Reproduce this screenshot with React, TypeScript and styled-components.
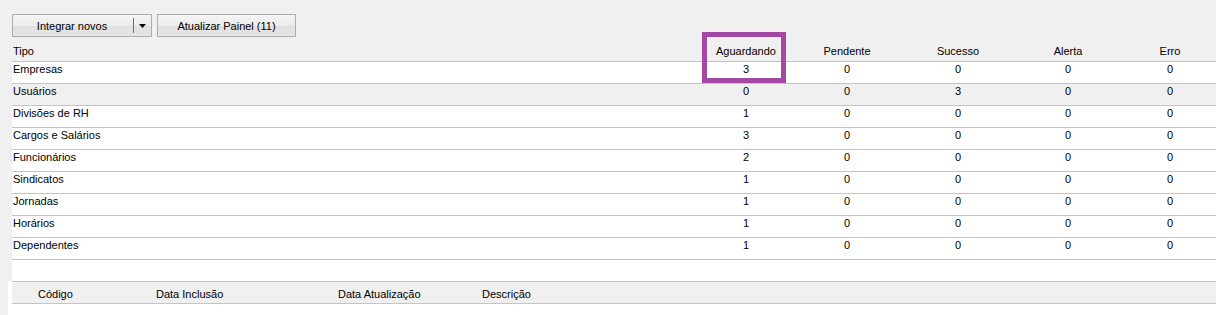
import React from "react";
import styled, { createGlobalStyle } from "styled-components";

const Global = createGlobalStyle`
  html, body { margin: 0; padding: 0; background: #f0f0f0; }
  body { font-family: "Liberation Sans", Arial, sans-serif; font-size: 11px; color: #000; }
`;

const Page = styled.div`
  position: relative;
  width: 1216px;
  height: 315px;
  overflow: hidden;
  background: #f0f0f0;
  display: flex;
  flex-direction: column;
`;

const Toolbar = styled.div`
  display: flex;
  gap: 5px;
  padding: 14px 0 0 12px;
  height: 23px;
`;

const ButtonBase = styled.div`
  box-sizing: border-box;
  height: 23px;
  border: 1px solid #adadad;
  background: linear-gradient(#f4f4f4, #ececec 50%, #e0e0e0 51%, #e5e5e5);
  display: flex;
  align-items: center;
  font-size: 11px;
  line-height: 16px;
  color: #000;
`;

const SplitButton = styled(ButtonBase)`
  width: 140px;
`;

const SplitMain = styled.div`
  width: 118px;
  text-align: center;
`;

const SplitDivider = styled.div`
  width: 1px;
  height: 15px;
  margin-left: 2px;
  background: #6b6b6b;
`;

const SplitArrow = styled.div`
  flex: 1;
  display: flex;
  justify-content: center;
  align-items: center;
`;

const PlainButton = styled(ButtonBase)`
  width: 139px;
  justify-content: center;
`;

const Grid = styled.div`
  margin-left: 12px;
  display: flex;
  flex-direction: column;
`;

const COLS = "684px 100px 102px 120px 100px 98px";

const HeaderRow = styled.div`
  display: grid;
  grid-template-columns: ${COLS};
  height: 24px;
  border-bottom: 1px solid #c4c4c4;
  line-height: 16px;
`;

const HeadCell = styled.div<{ $center?: boolean; $shift?: number }>`
  padding-top: 6px;
  padding-left: ${(p) => (p.$center ? p.$shift ?? 0 : 1)}px;
  text-align: ${(p) => (p.$center ? "center" : "left")};
`;

const Row = styled.div<{ $alt?: boolean }>`
  display: grid;
  grid-template-columns: ${COLS};
  height: 21px;
  border-bottom: 1px solid #c4c4c4;
  background: ${(p) => (p.$alt ? "#f0f0f0" : "#ffffff")};
  line-height: 14px;
`;

const Cell = styled.div<{ $center?: boolean; $shift?: number }>`
  padding-left: ${(p) => (p.$center ? p.$shift ?? 0 : 1)}px;
  text-align: ${(p) => (p.$center ? "center" : "left")};
`;

const Filler = styled.div`
  height: 21px;
  background: #ffffff;
`;

const Detail = styled.div`
  margin-left: 8px;
  flex: 1;
  display: flex;
  flex-direction: column;
  background: #ffffff;
`;

const DetailHeader = styled.div`
  margin-left: 4px;
  display: grid;
  grid-template-columns: 138px 182px 144px 1fr;
  height: 21px;
  border-top: 1px solid #c4c4c4;
  border-bottom: 1px solid #c4c4c4;
  background: #f0f0f0;
  line-height: 16px;
`;

const DetailHead = styled.div<{ $pad: number }>`
  padding: 4px 0 0 ${(p) => p.$pad}px;
`;

const Highlight = styled.div`
  position: absolute;
  left: 702px;
  top: 32px;
  width: 84px;
  height: 51px;
  box-sizing: border-box;
  border: 5px solid #a349a4;
  pointer-events: none;
`;

const rows: [string, number, number, number, number, number][] = [
  ["Empresas", 3, 0, 0, 0, 0],
  ["Usuários", 0, 0, 3, 0, 0],
  ["Divisões de RH", 1, 0, 0, 0, 0],
  ["Cargos e Salários", 3, 0, 0, 0, 0],
  ["Funcionários", 2, 0, 0, 0, 0],
  ["Sindicatos", 1, 0, 0, 0, 0],
  ["Jornadas", 1, 0, 0, 0, 0],
  ["Horários", 1, 0, 0, 0, 0],
  ["Dependentes", 1, 0, 0, 0, 0],
];

const heads = ["Aguardando", "Pendente", "Sucesso", "Alerta", "Erro"];
const shifts = [0, 0, 0, 0, 6];

export default function App() {
  return (
    <Page>
      <Global />
      <Toolbar>
        <SplitButton>
          <SplitMain>Integrar novos</SplitMain>
          <SplitDivider />
          <SplitArrow>
            <svg width="7" height="4" viewBox="0 0 7 4">
              <polygon points="0,0 7,0 3.5,4" fill="#000" />
            </svg>
          </SplitArrow>
        </SplitButton>
        <PlainButton>Atualizar Painel (11)</PlainButton>
      </Toolbar>
      <Grid>
        <HeaderRow>
          <HeadCell>Tipo</HeadCell>
          {heads.map((h, i) => (
            <HeadCell key={h} $center $shift={shifts[i]}>
              {h}
            </HeadCell>
          ))}
        </HeaderRow>
        {rows.map((r, idx) => (
          <Row key={r[0]} $alt={idx === 1}>
            <Cell>{r[0]}</Cell>
            {r.slice(1).map((v, i) => (
              <Cell key={i} $center $shift={shifts[i]}>
                {v}
              </Cell>
            ))}
          </Row>
        ))}
        <Filler />
      </Grid>
      <Detail>
        <DetailHeader>
          <DetailHead $pad={26}>Código</DetailHead>
          <DetailHead $pad={6}>Data Inclusão</DetailHead>
          <DetailHead $pad={6}>Data Atualização</DetailHead>
          <DetailHead $pad={6}>Descrição</DetailHead>
        </DetailHeader>
      </Detail>
      <Highlight />
    </Page>
  );
}
